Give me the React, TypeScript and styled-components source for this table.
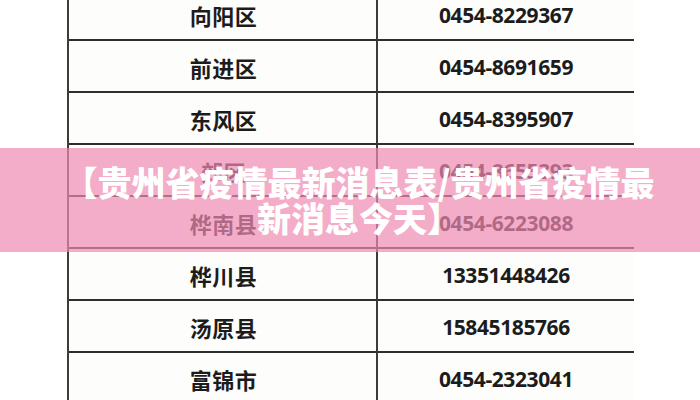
import React from "react";
import styled, { createGlobalStyle } from "styled-components";

const Global = createGlobalStyle`
  html, body { margin: 0; padding: 0; background: #ffffff; }
  body { width: 700px; height: 400px; overflow: hidden; }
`;

const Page = styled.div`
  position: relative;
  width: 700px;
  height: 400px;
  overflow: hidden;
  background: #fff;
`;

const Table = styled.div`
  margin-top: -11px;
  margin-left: 67px;
  width: 567px;
  display: grid;
  grid-template-columns: 309px 256px;
  border-left: 2px solid #3c3c3c;
  border-right: 2px solid #3c3c3c;
  box-sizing: border-box;
`;

const Cell = styled.div<{ $num?: boolean }>`
  height: 52px;
  box-sizing: border-box;
  border-bottom: 2px solid #2e2e2e;
  border-right: ${(p) => (p.$num ? "none" : "2px solid #3c3c3c")};
  display: flex;
  align-items: center;
  justify-content: center;
  background: #fdfdfc;
  color: #1c1c1c;
  font-family: ${(p) =>
    p.$num
      ? '"Open Sans", "Liberation Sans", sans-serif'
      : '"Noto Sans CJK SC", sans-serif'};
  font-weight: ${(p) => (p.$num ? 700 : 600)};
  font-size: ${(p) => (p.$num ? "21px" : "22px")};
  letter-spacing: ${(p) => (p.$num ? "-0.4px" : "0.5px")};
  padding-left: ${(p) => (p.$num ? "0" : "2px")};
  padding-top: 2px;
`;

const Band = styled.div`
  position: absolute;
  left: 0;
  right: 0;
  top: 148px;
  height: 104px;
  background: rgba(239, 138, 178, 0.7);
  display: flex;
  align-items: center;
  justify-content: center;
`;

const Caption = styled.div`
  color: #ffffff;
  font-family: "Noto Sans CJK SC", sans-serif;
  font-weight: 900;
  font-size: 34px;
  line-height: 36px;
  text-align: center;
  width: 680px;
  padding-left: 18px;
  letter-spacing: 0px;
`;

const rows: [string, string][] = [
  ["向阳区", "0454-8229367"],
  ["前进区", "0454-8691659"],
  ["东风区", "0454-8395907"],
  ["郊区", "0454-8655393"],
  ["桦南县", "0454-6223088"],
  ["桦川县", "13351448426"],
  ["汤原县", "15845185766"],
  ["富锦市", "0454-2323041"],
];

export default function App() {
  return (
    <Page>
      <Global />
      <Table>
        {rows.map(([name, phone]) => (
          <React.Fragment key={name}>
            <Cell>{name}</Cell>
            <Cell $num>{phone}</Cell>
          </React.Fragment>
        ))}
      </Table>
      <Band>
        <Caption>
          【贵州省疫情最新消息表/贵州省疫情最
          <br />
          新消息今天】
        </Caption>
      </Band>
    </Page>
  );
}
